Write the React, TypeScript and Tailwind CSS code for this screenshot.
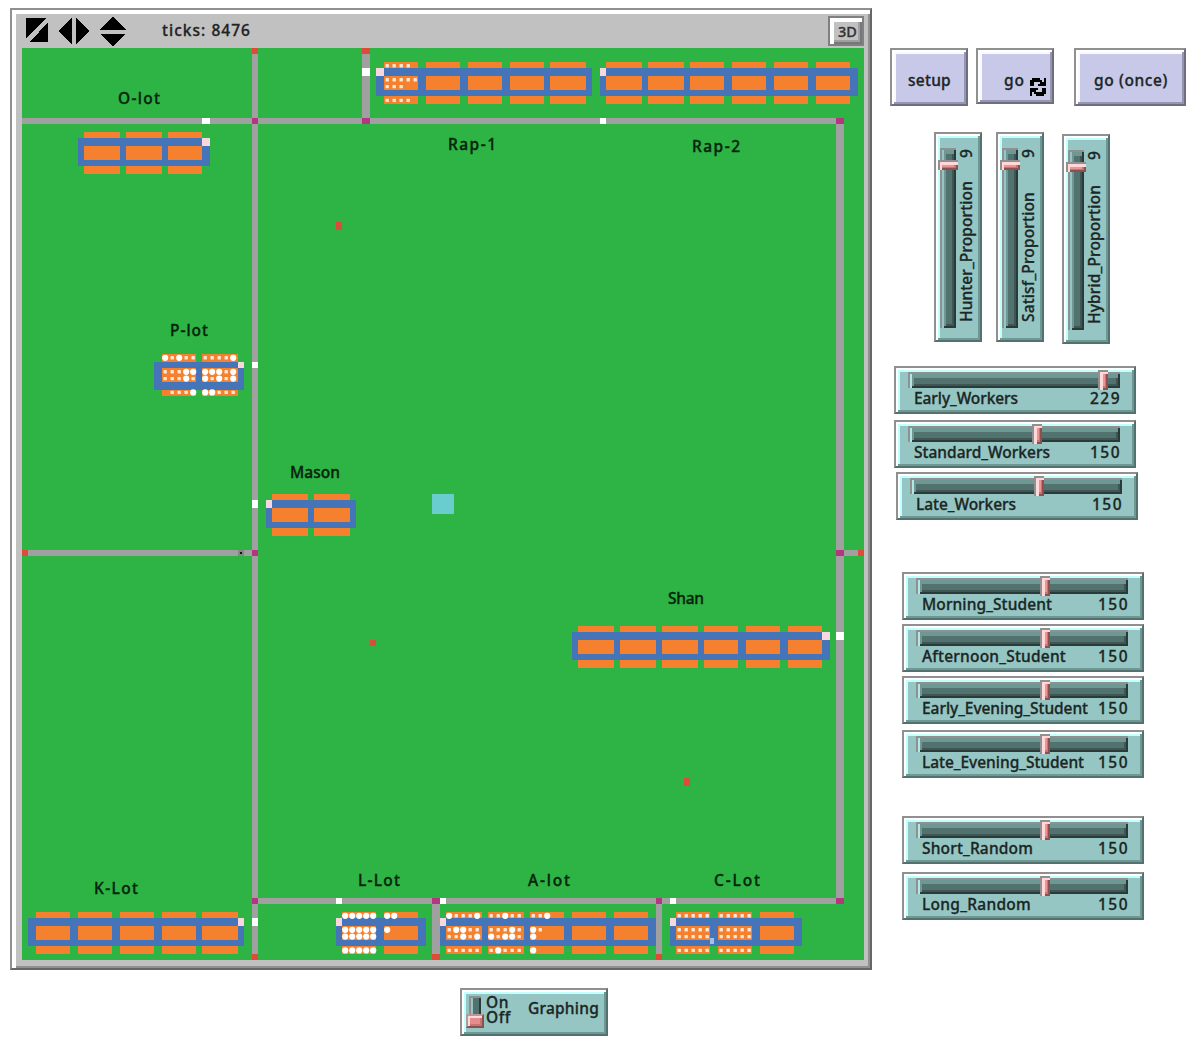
import { useLayoutEffect, useRef, useState } from "react";

/* Text that is tracked so that it fills a given length. */
function Fit({ text, len, className = "" }: { text: string; len: number; className?: string }) {
  const ref = useRef<HTMLSpanElement>(null);
  const [spacing, setSpacing] = useState(0);
  useLayoutEffect(() => {
    const el = ref.current;
    if (!el) return;
    const box = el.getBoundingClientRect();
    const along = getComputedStyle(el).writingMode.startsWith("vertical") ? box.height : box.width;
    setSpacing((len - along) / text.length);
  }, [text, len]);
  return (
    <span ref={ref} className={`inline-block whitespace-nowrap ${className}`} style={{ letterSpacing: spacing }}>
      {text}
    </span>
  );
}

const BEVEL =
  "border-2 border-t-[#909090] border-l-[#909090] border-r-[#527270] border-b-[#527270] bg-[#95c6c3] shadow-[inset_2px_2px_0_#ffffff,inset_-2px_-2px_0_#6f9794,inset_4px_4px_0_#c2ffff]";

function Slider({ name, len, value, thumb = "left-[136px]", className }: { name: string; len: number; value: string; thumb?: string; className: string }) {
  return (
    <div className={`relative h-12 w-[242px] pl-3 pr-[14px] pt-1 ${BEVEL} ${className}`}>
      <div className="h-4 border-l-2 border-t-2 border-[#909090] bg-[#527270] shadow-[inset_2px_0_0_#b4e6e3,inset_-2px_-2px_0_#293a39,inset_4px_4px_0_#6f9794,inset_-4px_-4px_0_#3e5654]" />
      <div className={`absolute top-[2px] h-5 w-[10px] border-l-2 border-t-2 border-[#909090] bg-[#ed9595] shadow-[inset_3px_2px_0_#ffd9d9,inset_-2px_-2px_0_#8e4f4f,inset_-3px_-4px_0_#c47575] ${thumb}`} />
      <div className="-mr-px flex justify-between pl-[6px] leading-[20px]">
        <Fit text={name} len={len} />
        <Fit text={value} len={31} />
      </div>
    </div>
  );
}

function VSlider({ name, len, className }: { name: string; len: number; className: string }) {
  return (
    <div className={`relative flex h-[210px] w-12 pl-1 pt-[14px] ${BEVEL} ${className}`}>
      <div className="h-[180px] w-4 border-l-2 border-t-2 border-[#909090] bg-[#527270] shadow-[inset_2px_0_0_#95c6c3,inset_-2px_-2px_0_#293a39,inset_4px_4px_0_#6f9794,inset_-4px_-4px_0_#3e5654]" />
      <div className="absolute left-[2px] top-[26px] h-[10px] w-5 border-l-2 border-t-2 border-[#909090] bg-[#ed9595] shadow-[inset_2px_3px_0_#ffd9d9,inset_-2px_-2px_0_#8e4f4f,inset_-4px_-3px_0_#c47575]" />
      <div className="flex h-[174px] w-[20px] rotate-180 justify-between [writing-mode:vertical-rl] leading-[20px]">
        <Fit text={name} len={len} />
        <Fit text="9" len={10} />
      </div>
    </div>
  );
}

const BUTTON =
  "relative border-2 border-t-[#909090] border-l-[#909090] border-r-[#6e6e80] border-b-[#6e6e80] bg-[#c8c8e8] shadow-[inset_2px_2px_0_#ffffff,inset_-2px_-2px_0_#9696ae,inset_4px_4px_0_#fbfbff] pt-[20px] leading-[20px]";

type Rect = [number, number, number, number];

const roads: Rect[] = [
  [252, 48, 6, 912], [22, 118, 822, 6], [362, 48, 8, 70], [836, 118, 8, 786], [258, 898, 586, 6],
  [432, 904, 8, 56], [656, 898, 6, 62], [22, 550, 236, 6], [844, 550, 20, 6],
];
const reds: Rect[] = [
  [252, 48, 6, 6], [362, 48, 8, 6], [22, 550, 6, 6], [858, 550, 6, 6], [252, 954, 6, 6], [432, 954, 8, 6],
  [656, 954, 6, 6], [336, 222, 6, 8], [370, 640, 6, 6], [684, 778, 6, 8],
];
const junctions: Rect[] = [
  [252, 118, 6, 6], [362, 118, 8, 6], [836, 118, 8, 6], [252, 550, 6, 6], [836, 550, 8, 6], [252, 898, 6, 6],
  [432, 898, 8, 6], [656, 898, 6, 6], [836, 898, 8, 6],
];
const entries: Rect[] = [
  [202, 118, 8, 6], [362, 68, 8, 8], [600, 118, 6, 6], [252, 362, 6, 6], [252, 500, 6, 8], [252, 918, 6, 8],
  [336, 898, 6, 6], [440, 898, 6, 6], [670, 898, 6, 6], [836, 632, 8, 8],
];

/* Cars per bay: four rows of five places, s = small car, L = large car. */
type Lot = { x: [number, number]; y: number; bays: [number, number][]; gate: [number, number]; cars?: string[][]; low?: boolean };
const full = ["sssss", "sssss", "sssss", "sssss"];
const lots: Lot[] = [
  { x: [78, 210], y: 132, bays: [[84, 120], [126, 162], [168, 202]], gate: [202, 210] },
  { x: [376, 592], y: 62, bays: [[384, 418], [426, 460], [468, 502], [510, 544], [550, 586]], gate: [376, 384], cars: [["ssss.", "sssss", "sss..", "ssss."]] },
  { x: [600, 858], y: 62, bays: [[606, 642], [648, 684], [690, 724], [732, 766], [774, 808], [816, 850]], gate: [600, 606] },
  { x: [154, 244], y: 354, low: true, bays: [[162, 196], [202, 238]], gate: [238, 244], cars: [["LsLss", "sssLL", "sssLs", ".sssL"], ["ssssL", "LLLsL", "LsLsL", "LLsss"]] },
  { x: [266, 356], y: 494, bays: [[272, 308], [314, 350]], gate: [266, 272] },
  { x: [572, 830], y: 626, bays: [[578, 614], [620, 656], [662, 698], [704, 738], [746, 780], [788, 822]], gate: [822, 830] },
  { x: [28, 244], y: 912, bays: [[36, 70], [78, 112], [120, 154], [162, 196], [202, 238]], gate: [238, 244] },
  { x: [336, 426], y: 912, bays: [[342, 376], [384, 418]], gate: [336, 342], cars: [["LLLLL", "LLLLL", "LLLLL", "LLLLL"], ["LL...", "L....", ".....", "....."]] },
  { x: [440, 656], y: 912, bays: [[446, 482], [488, 524], [530, 564], [572, 606], [614, 648]], gate: [440, 446], cars: [["LsssL", "sLLss", "ssLsL", "sssss"], ["ssLss", "sssLs", "LsLLs", "sLsss"], ["ssL..", "Ls...", "L....", "L...."]] },
  { x: [670, 802], y: 912, bays: [[676, 710], [718, 752], [760, 794]], gate: [670, 676], cars: [full, full] },
];

const labels: [string, number, number, number][] = [
  ["O-lot", 118, 104, 42], ["Rap-1", 448, 150, 48], ["Rap-2", 692, 152, 48], ["P-lot", 170, 336, 38],
  ["Mason", 290, 478, 50], ["Shan", 668, 604, 36], ["K-Lot", 94, 894, 44], ["L-Lot", 358, 886, 42],
  ["A-lot", 528, 886, 42], ["C-Lot", 714, 886, 46],
];

function Rects({ list, fill }: { list: Rect[]; fill: string }) {
  return <g fill={fill}>{list.map(([x, y, w, h]) => <rect key={`${x}-${y}`} x={x} y={y} width={w} height={h} />)}</g>;
}

function ParkingLot({ lot }: { lot: Lot }) {
  const { x, y, bays, gate, cars = [], low } = lot;
  const d = low ? [8, 14, 28, 36, 42] : [6, 14, 28, 34, 42];
  return (
    <g>
      {bays.map(([a, b]) => <rect key={a} x={a} y={y} width={b - a} height={d[4]} fill="#f5802d" />)}
      <rect x={x[0]} y={y + d[0]} width={x[1] - x[0]} height={d[3] - d[0]} fill="#4574b8" />
      {bays.map(([a, b]) => <rect key={a} x={a} y={y + d[1]} width={b - a} height={d[2] - d[1]} fill="#f5802d" />)}
      <rect x={gate[0]} y={y + d[0]} width={gate[1] - gate[0]} height={d[1] - d[0]} fill="#f9d7de" />
      {cars.map((bay, i) =>
        bay.map((row, r) =>
          row.split("").map((c, k) => {
            if (c === ".") return null;
            const cx = bays[i][0] + 3.2 + 7 * k;
            const cy = y + [3.8, 17.8, 24.6, 38.4][r];
            return c === "L" ? (
              <circle key={`${r}-${k}`} cx={cx} cy={cy} r={3.1} fill="#ffffff" />
            ) : (
              <rect key={`${r}-${k}`} x={cx - 1.7} y={cy - 1.7} width={3.4} height={3.4} rx={0.6} fill="#ffffff" opacity={0.8} />
            );
          }),
        ),
      )}
    </g>
  );
}

function World() {
  return (
    <svg width="842" height="912" viewBox="22 48 842 912" className="block bg-[#2eb445]">
      <Rects list={roads} fill="#a0a0a0" />
      <Rects list={reds} fill="#df4b38" />
      <Rects list={junctions} fill="#b53680" />
      <Rects list={entries} fill="#ffffff" />
      {lots.map((lot) => <ParkingLot key={`${lot.x[0]}-${lot.y}`} lot={lot} />)}
      <rect x="710" y="938" width="4" height="6" fill="#a9bfe0" />
      <rect x="432" y="494" width="22" height="20" fill="#69cdd0" />
      <rect x="238" y="550" width="6" height="6" fill="#858585" />
      <rect x="240" y="552" width="2" height="2" fill="#111111" />
      {labels.map(([t, x, y, w]) => (
        <text key={t} x={x} y={y} textLength={w} lengthAdjust="spacing" fill="#06240c" stroke="#06240c" strokeWidth="0.35">{t}</text>
      ))}
    </svg>
  );
}

export default function App() {
  return (
    <div className="flex h-[1054px] w-[1202px] items-start overflow-hidden bg-white font-['Noto_Sans',sans-serif] text-[15.5px] font-medium text-[#1b2625] [-webkit-text-stroke:0.3px]">
      <div className="ml-[10px] mt-2 w-[862px] shrink-0">
        <div className="h-[962px] border-2 border-b-[#666666] border-l-[#909090] border-r-[#666666] border-t-[#909090] bg-[#c1c1c1] pl-[10px] shadow-[inset_4px_4px_0_#ffffff,inset_-2px_-2px_0_#909090]">
          <div className="flex h-[38px] items-start text-black">
            <svg width="104" height="34" viewBox="24 14 104 34" className="ml-[2px] mt-1" shapeRendering="crispEdges">
              <path d="M26 18h20L26 38zM48 22v20H30zM72 18v26L58 31zM76 18v26l14-13zM113 16l-13 14h26zM100 34h26l-13 12z" />
            </svg>
            <Fit text="ticks: 8476" len={89} className="ml-[34px] mt-[9px] leading-[22px] text-[#222222]" />
            <div className="ml-auto mr-[6px] mt-[6px] h-[30px] w-9 border-2 border-[#808080] bg-[#c1c1c1] pl-2 pt-[1px] text-[14.5px] leading-[24px] text-[#333333] shadow-[inset_4px_4px_0_#ffffff,inset_-2px_-2px_0_#777777,inset_-4px_-4px_0_#a0a0a0]">
              <Fit text="3D" len={19} />
            </div>
          </div>
          <World />
        </div>
        <div className={`ml-[450px] mt-[18px] flex h-12 w-[148px] pl-1 ${BEVEL}`}>
          <div className="flex w-[18px] flex-col items-center pt-[6px]">
            <div className="h-[18px] w-3 border-l-2 border-t-2 border-[#909090] bg-[#527270] shadow-[inset_2px_0_0_#95c6c3,inset_-2px_0_0_#293a39]" />
            <div className="h-[14px] w-[18px] border-2 border-b-[#8e4f4f] border-l-[#b79999] border-r-[#8e4f4f] border-t-[#b79999] bg-[#e58c8c] shadow-[inset_2px_2px_0_#ffd9d9,inset_-2px_-2px_0_#c47575]" />
          </div>
          <div className="ml-[2px] flex w-[42px] flex-col items-start pt-[5px] leading-[15px]">
            <Fit text="On" len={23} />
            <Fit text="Off" len={25} />
          </div>
          <Fit text="Graphing" len={71} className="mt-[8px] leading-[20px]" />
        </div>
      </div>

      <div className="w-[330px] pt-12">
        <div className="flex items-start pl-[18px]">
          <div className={`h-[58px] w-[78px] pl-4 ${BUTTON}`}><Fit text="setup" len={43} /></div>
          <div className={`ml-2 h-14 w-[78px] pl-[26px] ${BUTTON}`}>
            <Fit text="go" len={21} />
            <svg className="absolute bottom-[6px] right-[6px]" width="16" height="18" viewBox="0 0 16 18" fill="#000" shapeRendering="crispEdges">
              <path d="M2 0h8v2h2v2h2V0h2v8H8V6h2V4H4v4H0V2h2z" />
              <path d="M14 18H6v-2H4v-2H2v4H0v-8h8v2H6v2h6v-4h4v6h-2z" />
            </svg>
          </div>
          <div className={`ml-5 h-[58px] w-28 pl-[18px] ${BUTTON}`}><Fit text="go (once)" len={74} /></div>
        </div>
        <div className="mt-[26px] flex items-start pl-[62px]">
          <VSlider name="Hunter_Proportion" len={141} className="" />
          <VSlider name="Satisf_Proportion" len={130} className="ml-[14px]" />
          <VSlider name="Hybrid_Proportion" len={139} className="ml-[18px] mt-[2px]" />
        </div>
        <div className="mt-[22px] pl-[22px]">
          <Slider name="Early_Workers" len={104} value="229" thumb="left-[202px]" className="" />
          <Slider name="Standard_Workers" len={136} value="150" className="mt-[6px]" />
          <Slider name="Late_Workers" len={100} value="150" className="ml-[2px] mt-1" />
        </div>
        <div className="mt-[52px] pl-[30px]">
          <Slider name="Morning_Student" len={130} value="150" className="" />
          <Slider name="Afternoon_Student" len={144} value="150" className="mt-1" />
          <Slider name="Early_Evening_Student" len={166} value="150" className="mt-1" />
          <Slider name="Late_Evening_Student" len={162} value="150" className="mt-[6px]" />
        </div>
        <div className="mt-[38px] pl-[30px]">
          <Slider name="Short_Random" len={111} value="150" className="" />
          <Slider name="Long_Random" len={109} value="150" className="mt-2" />
        </div>
      </div>
    </div>
  );
}
